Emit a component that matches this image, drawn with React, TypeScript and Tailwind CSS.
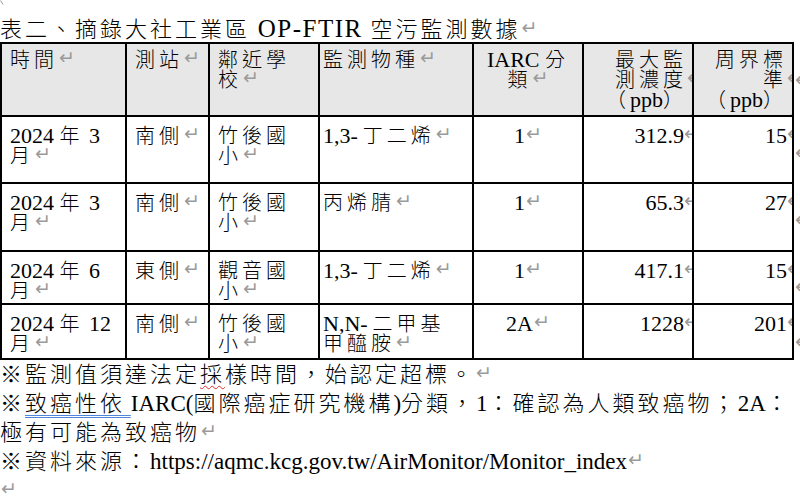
import React from 'react';

const CJK_RE = /([\u203b\u2e80-\u9fff\uf900-\ufaff\uff00-\uffef]+)/;

function T({ s, cjk, lat }: { s: string; cjk: string; lat?: string }) {
  const parts = s.split(CJK_RE);
  return (
    <>
      {parts.map((p, i) => {
        if (!p) return null;
        if (i % 2 === 1) {
          const prev = parts[i - 1];
          const gap = !!prev && /[A-Za-z0-9\-]$/.test(prev) && /^[\u4e00-\u9fff]/.test(p);
          return (
            <span key={i} className={cjk + (gap ? ' ml-[5px]' : '')}>
              {p}
            </span>
          );
        }
        return (
          <span key={i} className={lat}>
            {p}
          </span>
        );
      })}
    </>
  );
}

const CELL_CJK = 'text-[20px] tracking-[4px] font-light';
const NOTE_CJK = 'text-[22px] tracking-[3px] font-light';
const TITLE_CJK = 'text-[22px] tracking-[3px] font-light';

function M({ hang }: { hang?: boolean }) {
  return (
    <span
      className={
        "font-['DejaVu_Sans'] text-[19px] leading-[0] align-[3px] text-[#9a9a9a] " +
        (hang ? '-mr-[16px]' : 'ml-[1px]')
      }
    >
      ↵
    </span>
  );
}

const COLS = [
  'pl-[8px] pr-[8px] text-left',
  'pl-[8px] pr-[8px] text-left',
  'pl-[8px] pr-[8px] text-left',
  'pl-[3px] pr-[8px] text-left',
  'px-[8px] text-center',
  'pl-[8px] pr-[8px] text-right',
  'pl-[8px] pr-[5px] text-right',
];

function Cell({ col, head, children }: { col: number; head?: boolean; children: React.ReactNode }) {
  return (
    <div
      className={
        'border-r-2 border-b-2 border-black overflow-hidden text-[22px] leading-[19px] ' +
        (head ? 'bg-[#e7e7e7] pt-[6px] ' : 'pt-[9px] ') +
        COLS[col]
      }
    >
      {children}
    </div>
  );
}

const ROWS = [
  ['2024 年 3 月', '南側', '竹後國小', '1,3-丁二烯', '1', '312.9', '15'],
  ['2024 年 3 月', '南側', '竹後國小', '丙烯腈', '1', '65.3', '27'],
  ['2024 年 6 月', '東側', '觀音國小', '1,3-丁二烯', '1', '417.1', '15'],
  ['2024 年 12 月', '南側', '竹後國小', 'N,N-二甲基甲醯胺', '2A', '1228', '201'],
];

function EndMark({ pt }: { pt: string }) {
  return (
    <div className={pt + ' pl-[1px] leading-[14px]'}>
      <span className="font-['DejaVu_Sans'] text-[19px] text-[#9a9a9a]">↵</span>
    </div>
  );
}

export default function App() {
  return (
    <div className="relative w-[800px] h-[498px] overflow-hidden bg-white text-black font-['Liberation_Serif','Noto_Sans_CJK_TC',serif]">
      <svg className="absolute left-0 top-0" width="6" height="6" viewBox="0 0 6 6">
        <path d="M0.5 0.5 L3 4.5" stroke="#9a9a9a" strokeWidth="1" fill="none" />
      </svg>

      {/* Title */}
      <div className="pt-[14px] h-[42px] text-[25px] leading-[30px] whitespace-nowrap">
        <T s="表二、摘錄大社工業區 OP-FTIR 空污監測數據" cjk={TITLE_CJK} lat="tracking-[1.5px]" />
        <M />
      </div>

      {/* Table */}
      <div className="flex">
        <div className="w-[794px] grid grid-cols-[125px_83px_110px_154px_110px_110px_100px] grid-rows-[73px_67px_68px_53px_55px] border-l-2 border-t-2 border-black">
          <Cell col={0} head>
            <T s="時間" cjk={CELL_CJK} />
            <M />
          </Cell>
          <Cell col={1} head>
            <T s="測站" cjk={CELL_CJK} />
            <M />
          </Cell>
          <Cell col={2} head>
            <T s="鄰近學校" cjk={CELL_CJK} />
            <M />
          </Cell>
          <Cell col={3} head>
            <T s="監測物種" cjk={CELL_CJK} />
            <M />
          </Cell>
          <Cell col={4} head>
            <T s="IARC 分類" cjk={CELL_CJK} />
            <M />
          </Cell>
          <div className="border-r-2 border-b-2 border-black overflow-hidden text-[22px] leading-[19px] bg-[#e7e7e7] pt-[6px] pl-[8px] pr-[5px] text-right">
            <div>
              <T s="最大監測濃度" cjk={CELL_CJK} />
              <M hang />
            </div>
            <div>
              <T s="（ppb）" cjk={CELL_CJK} />
              <M hang />
            </div>
          </div>
          <div className="border-r-2 border-b-2 border-black overflow-hidden text-[22px] leading-[19px] bg-[#e7e7e7] pt-[6px] pl-[8px] pr-[5px] text-right">
            <div>
              <T s="周界標準" cjk={CELL_CJK} />
              <M hang />
            </div>
            <div>
              <T s="（ppb）" cjk={CELL_CJK} />
              <M hang />
            </div>
          </div>

          {ROWS.map((r, ri) =>
            r.map((v, ci) => (
              <Cell key={ri + '-' + ci} col={ci}>
                <T s={v} cjk={CELL_CJK} />
                <M hang={ci >= 5} />
              </Cell>
            ))
          )}
        </div>

        {/* end-of-row marks */}
        <div className="w-[6px] overflow-hidden grid grid-rows-[75px_67px_68px_53px_55px]">
          <EndMark pt="pt-[30px]" />
          <EndMark pt="pt-[28px]" />
          <EndMark pt="pt-[28px]" />
          <EndMark pt="pt-[27px]" />
          <EndMark pt="pt-[29px]" />
        </div>
      </div>

      {/* Notes */}
      <div className="text-[23px] leading-[29px] whitespace-nowrap">
        <div>
          <T s="※監測值須達法定" cjk={NOTE_CJK} />
          <span className="underline decoration-wavy decoration-[#e03030] decoration-1 underline-offset-[3px]">
            <T s="採" cjk={NOTE_CJK} />
          </span>
          <T s="樣時間，始認定超標。" cjk={NOTE_CJK} />
          <M />
        </div>
        <div>
          <T s="※" cjk={NOTE_CJK} />
          <span className="underline decoration-double decoration-[#4f86db] decoration-1 underline-offset-[4px]">
            <T s="致癌性依 " cjk={NOTE_CJK} />
          </span>
          <T s="IARC(國際癌症研究機構)分類，1：確認為人類致癌物；2A：" cjk={NOTE_CJK} />
        </div>
        <div>
          <T s="極有可能為致癌物" cjk={NOTE_CJK} />
          <M />
        </div>
        <div>
          <T s="※資料來源：https://aqmc.kcg.gov.tw/AirMonitor/Monitor_index" cjk={NOTE_CJK} />
          <M />
        </div>
        <div>
          <M />
        </div>
      </div>
    </div>
  );
}
